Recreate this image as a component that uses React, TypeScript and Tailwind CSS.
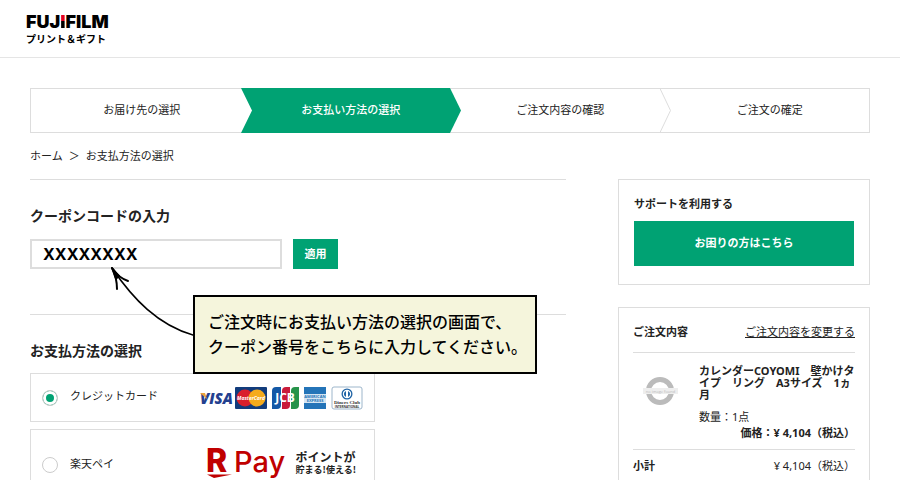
import { useState } from 'react';
import type { ReactNode } from 'react';
import clsx from 'clsx';

const steps = ['お届け先の選択', 'お支払い方法の選択', 'ご注文内容の確認', 'ご注文の確定'];

function StepEdge({ type }: { type: 'enter' | 'leave' | 'line' }) {
    return (
        <svg width="11" height="45" viewBox="0 0 11 45" className="shrink-0" aria-hidden="true">
            {type === 'enter' && <path d="M0 0H11V45H0L11 22.5Z" fill="#00a273" />}
            {type === 'leave' && <path d="M0 0L11 22.5L0 45Z" fill="#00a273" />}
            {type === 'line' && <path d="M0 0.5L10.5 22.5L0 44.5" fill="none" stroke="#ddd" />}
        </svg>
    );
}

function Steps() {
    const edges = [null, 'enter', 'leave', 'line'] as const;
    return (
        <ol className="grid grid-cols-4 border border-[#ddd]">
            {steps.map((label, i) => {
                const edge = edges[i];
                return (
                    <li key={label} className={clsx('-my-px flex h-[45px]', i === 0 && 'pl-3')}>
                        {edge && <StepEdge type={edge} />}
                        <span
                            className={clsx(
                                'flex flex-1 items-center justify-center pb-0.5 text-[11px]',
                                i === 1 && 'bg-[#00a273] font-medium text-white'
                            )}
                        >
                            {label}
                        </span>
                    </li>
                );
            })}
        </ol>
    );
}

function CardBrands() {
    return (
        <svg width="165" height="24" viewBox="0 0 165 24" role="img" aria-label="VISA MasterCard JCB AMEX Diners" fontFamily="'Open Sans', sans-serif" fontWeight="700">
            <text x="1" y="18" fontSize="15" fontWeight="800" fontStyle="italic" fill="#23408f">VISA</text>
            <path d="M1 7H6L8 13Z" fill="#e9a23b" />

            <rect x="36" y="1" width="32" height="22" rx="1" fill="#123c7c" />
            <circle cx="46" cy="12" r="8.5" fill="#d9202c" />
            <circle cx="58" cy="12" r="8.5" fill="#f5ab1c" />
            <text x="52" y="14" fontSize="5" fontStyle="italic" textAnchor="middle" fill="#fff">MasterCard</text>

            <path d="M77 1H82V19Q82 23 78 23H73V5Q73 1 77 1Z" fill="#1458a6" />
            <path d="M87 1H91V19Q91 23 87 23H83V5Q83 1 87 1Z" fill="#c91b3b" />
            <path d="M96 1H100V19Q100 23 96 23H92V5Q92 1 96 1Z" fill="#26934a" />
            <text x="86" y="16" fontSize="12" textAnchor="middle" fill="#fff">JCB</text>

            <rect x="105" y="1" width="22" height="22" fill="#2474b8" />
            <path d="M105 8H127V17H105Z" fill="#d5e5f2" />
            <text x="116" y="12" fontSize="4" textAnchor="middle" fill="#2474b8">AMERICAN</text>
            <text x="116" y="16" fontSize="4" textAnchor="middle" fill="#2474b8">EXPRESS</text>

            <rect x="133" y="1" width="30" height="22" rx="2" fill="#fff" stroke="#9db6cb" />
            <circle cx="148" cy="8" r="5.5" fill="#1e63a5" />
            <circle cx="148" cy="8" r="4.2" fill="#fff" />
            <path d="M147 5A3.2 3.2 0 0 0 147 11ZM149 5A3.2 3.2 0 0 1 149 11Z" fill="#1e63a5" />
            <text x="148" y="18" fontSize="5" textAnchor="middle" fill="#333" fontFamily="'Liberation Serif', serif">Diners Club</text>
            <text x="148" y="22" fontSize="3" textAnchor="middle" fill="#333">INTERNATIONAL</text>
        </svg>
    );
}

function RakutenPay() {
    return (
        <span className="flex items-center gap-1.5">
            <svg width="84" height="54" viewBox="0 0 84 54" role="img" aria-label="R Pay" fill="#c00000" fontFamily="Inter, sans-serif">
                <text x="0" y="34" fontSize="32" fontWeight="800">R</text>
                <text x="28" y="34" fontSize="29" fontWeight="500">Pay</text>
                <path d="M1 36.5H26L8 40Z" />
            </svg>
            <span className="pb-1 text-[#222]">
                <span className="block text-xs leading-[14px] font-bold">ポイントが</span>
                <span className="block text-[9px] leading-3 font-bold">貯まる!使える!</span>
            </span>
        </span>
    );
}

type PaymentOptionProps = {
    label: string;
    checked: boolean;
    onSelect: () => void;
    className: string;
    children: ReactNode;
};

function PaymentOption({ label, checked, onSelect, className, children }: PaymentOptionProps) {
    return (
        <label className={clsx('flex items-center border border-[#ddd] pl-[11px]', className)}>
            <input
                type="radio"
                name="payment"
                checked={checked}
                onChange={onSelect}
                className="size-4 appearance-none rounded-full border border-[#ccc] bg-white checked:bg-[#00a273] checked:shadow-[inset_0_0_0_3px_white]"
            />
            <span className="ml-3 flex-1 pb-1 text-[11px]">{label}</span>
            {children}
        </label>
    );
}

function Callout() {
    return (
        <div className="absolute top-[86px] left-20 flex">
            <svg width="83" height="74" viewBox="0 0 83 74" className="shrink-0" fill="none" stroke="#000" strokeWidth="1.6" strokeLinecap="round" aria-hidden="true">
                <path d="M2 2C23 33 48 59 83 69" />
                <path d="M2 2Q7 12 7 23M2 2Q9 12 18 15" strokeWidth="2" />
                <path d="M2 2L6 13L9 10Z" fill="#000" />
            </svg>
            <p className="mt-[29px] h-[79px] w-[344px] border-2 border-black bg-[#f5f5dc] px-[13px] py-3 text-base leading-[25px] font-medium whitespace-nowrap text-black">
                ご注文時にお支払い方法の選択の画面で、
                <br />
                クーポン番号をこちらに入力してください。
            </p>
        </div>
    );
}

function OrderSummary() {
    return (
        <section className="border border-[#ddd] px-[14px] pt-4 pb-6 font-['Noto_Sans','Noto_Sans_CJK_JP',sans-serif]">
            <div className="flex h-7 items-start justify-between">
                <h2 className="text-[11px] leading-4 font-bold">ご注文内容</h2>
                <a href="#order" className="text-[11px] leading-4 underline">ご注文内容を変更する</a>
            </div>
            <div className="flex border-y border-[#ddd] pt-3 pb-2">
                <svg width="36" height="30" viewBox="0 0 36 30" className="mt-3 ml-[10px] shrink-0" role="img" aria-label="no image">
                    <circle cx="17" cy="14" r="11.5" fill="none" stroke="#bbb" strokeWidth="5" />
                    <rect x="0" y="11" width="35" height="6" fill="#eee" />
                    <text x="17.5" y="15.5" fontSize="4" textAnchor="middle" fill="#bbb" fontFamily="'Open Sans', sans-serif">no image found</text>
                </svg>
                <div className="ml-5 flex-1">
                    <p className="text-[11px] leading-3 font-bold whitespace-nowrap">
                        カレンダーCOYOMI　壁かけタ
                        <br />
                        イプ　リング　A3サイズ　1ヵ
                        <br />月
                    </p>
                    <p className="mt-2 text-[11px] leading-4">数量：1点</p>
                    <p className="text-right text-[11px] leading-4 font-bold">価格：¥ 4,104（税込）</p>
                </div>
            </div>
            <dl className="mt-2 flex justify-between text-[11px] leading-4">
                <dt className="font-bold">小計</dt>
                <dd>¥ 4,104（税込）</dd>
            </dl>
        </section>
    );
}

export default function App() {
    const [coupon, setCoupon] = useState('XXXXXXXX');
    const [payment, setPayment] = useState('card');

    return (
        <div className="h-screen overflow-hidden bg-white font-['Noto_Sans_CJK_JP',sans-serif] text-[#222]">
            <header className="h-[58px] border-b border-[#e5e5e5] pt-3 pl-[26px] text-black">
                <div className="font-['Inter',sans-serif] text-lg leading-5 font-black">
                    FUJ
                    <span className="bg-linear-to-b from-[#e6001f] from-50% to-black to-50% bg-clip-text text-transparent">I</span>
                    FILM
                </div>
                <div className="text-[10px] leading-[14px] font-bold">プリント＆ギフト</div>
            </header>

            <main className="px-[30px] pt-[30px]">
                <Steps />
                <nav className="mt-[14px] flex gap-1.5 text-[11px] leading-4">
                    <a href="#home">ホーム</a>
                    <span>＞</span>
                    <span>お支払方法の選択</span>
                </nav>

                <div className="mt-4 flex gap-[52px]">
                    <div className="min-w-0 flex-1">
                        <section className="relative h-[135px] border-t border-[#ddd] pt-[25px]">
                            <h2 className="text-sm leading-5 font-bold">
                                <label htmlFor="coupon">クーポンコードの入力</label>
                            </h2>
                            <div className="mt-[14px] flex gap-[11px]">
                                <input
                                    id="coupon"
                                    value={coupon}
                                    onChange={(e) => setCoupon(e.target.value)}
                                    className="h-[30px] w-[252px] border-2 border-[#ddd] px-[11px] font-['Inter',sans-serif] text-base font-bold text-black"
                                />
                                <button type="button" className="h-[30px] w-[45px] bg-[#00a273] pb-0.5 text-[11px] font-bold text-white">
                                    適用
                                </button>
                            </div>
                            <Callout />
                        </section>

                        <section className="border-t border-[#ddd] pt-[25px]">
                            <h2 className="text-sm leading-5 font-bold">お支払方法の選択</h2>
                            <div className="mt-[13px] flex w-[345px] flex-col gap-[7px]">
                                <PaymentOption
                                    label="クレジットカード"
                                    checked={payment === 'card'}
                                    onSelect={() => setPayment('card')}
                                    className="h-[49px] pr-[10px]"
                                >
                                    <CardBrands />
                                </PaymentOption>
                                <PaymentOption
                                    label="楽天ペイ"
                                    checked={payment === 'rakuten'}
                                    onSelect={() => setPayment('rakuten')}
                                    className="h-[72px] pr-[18px]"
                                >
                                    <RakutenPay />
                                </PaymentOption>
                            </div>
                        </section>
                    </div>

                    <aside className="flex w-[252px] shrink-0 flex-col gap-[22px]">
                        <section className="border border-[#ddd] px-[15px] pt-[15px] pb-[18px]">
                            <h2 className="text-[11px] leading-4 font-bold">サポートを利用する</h2>
                            <button type="button" className="mt-[10px] h-[45px] w-full bg-[#00a273] pb-0.5 text-[11px] font-bold text-white">
                                お困りの方はこちら
                            </button>
                        </section>
                        <OrderSummary />
                    </aside>
                </div>
            </main>
        </div>
    );
}
